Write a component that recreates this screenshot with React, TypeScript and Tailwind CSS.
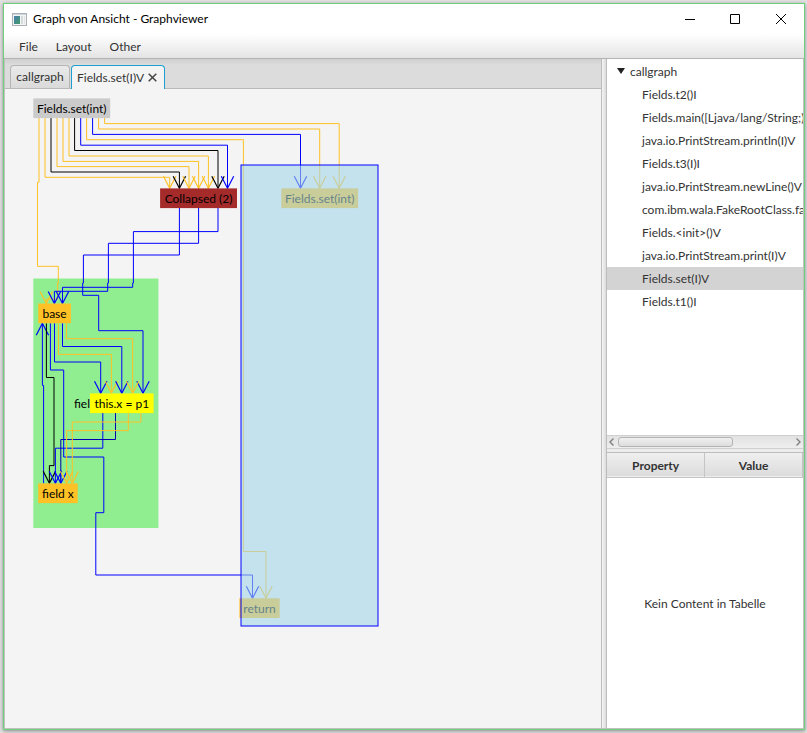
import React from "react";

const ORANGE = "#ffc125";
const BLUE = "#0000ff";
const BLACK = "#000000";

type Edge = { color: string; points: string; tip?: [number, number]; up?: boolean };

const edges: Edge[] = [
  { color: ORANGE, points: "39,118 39,182.3 37.5,182.3 37.5,266.3 58.3,266.3 58.3,283 57.6,283 57.6,299 46.3,299 46.3,303.5", tip: [46.3, 303.5] },
  { color: ORANGE, points: "45,118 45,177.3 169.7,177.3 169.7,188.3", tip: [169.7, 188.3] },
  { color: BLACK, points: "51,118 51,172 179.4,172 179.4,188.3", tip: [179.4, 188.3] },
  { color: ORANGE, points: "57,118 57,166.6 189,166.6 189,188.3", tip: [189, 188.3] },
  { color: ORANGE, points: "63,118 63,161.4 198.6,161.4 198.6,188.3", tip: [198.6, 188.3] },
  { color: ORANGE, points: "69,118 69,156 208.4,156 208.4,188.3", tip: [208.4, 188.3] },
  { color: BLACK, points: "74.6,118 74.6,150.5 218,150.5 218,188.3", tip: [218, 188.3] },
  { color: BLUE, points: "80.7,118 80.7,145.2 227.5,145.2 227.5,188.3", tip: [227.5, 188.3] },
  { color: ORANGE, points: "86.6,118 86.6,139.7 243.4,139.7 243.4,551.5 266,551.5 266,598.3", tip: [266, 598.3] },
  { color: BLUE, points: "92.6,118 92.6,134.4 300.5,134.4 300.5,188.3", tip: [300.5, 188.3] },
  { color: ORANGE, points: "98.6,118 98.6,129 319.7,129 319.7,188.3", tip: [319.7, 188.3] },
  { color: ORANGE, points: "104.6,118 104.6,123.6 339.2,123.6 339.2,188.3", tip: [339.2, 188.3] },
  { color: BLUE, points: "179.4,208 179.4,255 83.4,255 83.4,283 82.7,283 82.7,295.3 98.7,295.3 98.7,330.7 143,330.7 143,393.3", tip: [143, 393.3] },
  { color: BLUE, points: "198.6,208 198.6,243.3 108.4,243.3 108.4,283 107.7,283 107.7,291.3 54.4,291.3 54.4,303.5", tip: [54.4, 303.5] },
  { color: BLUE, points: "218,208 218,231.6 133.4,231.6 133.4,283 132.7,283 132.7,287.3 62.5,287.3 62.5,303.5", tip: [62.5, 303.5] },
  { color: BLUE, points: "42.4,323.3 42.4,385.4 43.6,385.4 43.6,483.3", tip: [42.4, 323.3], up: true },
  { color: BLACK, points: "46.4,323.3 46.4,377.5 54,377.5 54,465.6 49.4,465.6 49.4,483.3", tip: [49.4, 483.3] },
  { color: BLUE, points: "50.4,323.3 50.4,370 63.7,370 63.7,457 103.8,457 103.8,512.7 95.8,512.7 95.8,575 252.5,575 252.5,598.3", tip: [252.5, 598.3] },
  { color: BLUE, points: "54.5,323.3 54.5,362 100.7,362 100.7,393.3", tip: [100.7, 393.3] },
  { color: ORANGE, points: "58.4,323.3 58.4,354.4 111.4,354.4 111.4,393.3", tip: [111.4, 393.3] },
  { color: BLUE, points: "62.5,323.3 62.5,346.5 121.8,346.5 121.8,393.3", tip: [121.8, 393.3] },
  { color: ORANGE, points: "66.5,323.3 66.5,338.7 132.6,338.7 132.6,393.3", tip: [132.6, 393.3] },
  { color: BLUE, points: "102.8,413 102.8,448.2 55.4,448.2 55.4,483.3", tip: [55.4, 483.3] },
  { color: "#0000b0", points: "115.5,413 115.5,439.5 60.8,439.5 60.8,483.3" },
  { color: BLUE, points: "60.8,470 60.8,483.3", tip: [60.8, 483.3] },
  { color: ORANGE, points: "128.3,413 128.3,430.6 66.6,430.6 66.6,483.3", tip: [66.6, 483.3] },
  { color: ORANGE, points: "140.9,413 140.9,422 72.3,422 72.3,483.3", tip: [72.3, 483.3] },
];

type GraphNode = { label: string; x: number; y: number; w: number; fill: string };

const nodes: GraphNode[] = [
  { label: "Fields.set(int)", x: 33.3, y: 98.4, w: 76.9, fill: "#cbcbcb" },
  { label: "Collapsed (2)", x: 160.1, y: 188.4, w: 76.9, fill: "#a52a2a" },
  { label: "Fields.set(int)", x: 281.3, y: 188.4, w: 76.8, fill: ORANGE },
  { label: "base", x: 38.2, y: 303.5, w: 32.7, fill: ORANGE },
  { label: "this.x = p1", x: 90, y: 393.4, w: 63.6, fill: "#ffff00" },
  { label: "field x", x: 38.2, y: 483.4, w: 39.5, fill: ORANGE },
  { label: "return", x: 239.4, y: 598.3, w: 40.3, fill: ORANGE },
];

function arrow([x, y]: [number, number], up?: boolean) {
  const dy = up ? 12 : -12;
  return `${x - 6.2},${y + dy} ${x},${y} ${x + 6.2},${y + dy}`;
}

function GraphCanvas() {
  return (
    <svg width="596" height="639" viewBox="5 89 596 639" className="block shrink-0" role="img" aria-label="Fields.set(I)V">
      <rect x="33.3" y="278.5" width="125.1" height="249.5" fill="#90ee90" />
      <g fill="none" strokeWidth="1">
        {edges.map((e, i) => (
          <g key={i} stroke={e.color}>
            <polyline points={e.points} />
            {e.tip && <polyline points={arrow(e.tip, e.up)} strokeWidth="1.2" />}
          </g>
        ))}
      </g>
      <g className="text-xs" textAnchor="middle">
        <text x="74" y="408" textAnchor="start">fiel</text>
        {nodes.map((n, i) => (
          <g key={i}>
            <rect x={n.x} y={n.y} width={n.w} height="19.7" fill={n.fill} />
            <text x={n.x + n.w / 2} y={n.y + 14.6} fill="#000">{n.label}</text>
          </g>
        ))}
      </g>
      <rect x="241" y="165" width="137" height="461" fill="#a4d5e7" fillOpacity="0.6" stroke={BLUE} />
    </svg>
  );
}

const methods = [
  "Fields.t2()I",
  "Fields.main([Ljava/lang/String;)",
  "java.io.PrintStream.println(I)V",
  "Fields.t3(I)I",
  "java.io.PrintStream.newLine()V",
  "com.ibm.wala.FakeRootClass.fa",
  "Fields.<init>()V",
  "java.io.PrintStream.print(I)V",
  "Fields.set(I)V",
  "Fields.t1()I",
];

function TitleBar() {
  return (
    <header className="flex h-[30px] items-center bg-white pl-2 text-black">
      <svg width="15" height="13" viewBox="0 0 15 13" className="mr-1.5" aria-hidden="true">
        <defs>
          <linearGradient id="appIcon" x1="0" y1="0" x2="1" y2="1">
            <stop offset="0" stopColor="#4a7fb0" />
            <stop offset="1" stopColor="#3f9a68" />
          </linearGradient>
        </defs>
        <rect x="0.5" y="0.5" width="14" height="12" fill="#f4f4f4" stroke="#a9b0b6" />
        <rect x="1" y="1" width="13" height="1" fill="#cdd6de" />
        <rect x="2" y="3" width="6" height="8" fill="url(#appIcon)" />
        <rect x="9" y="3" width="2" height="8" fill="#d2dcdc" />
        <rect x="12" y="3" width="1" height="8" fill="#dfe5e5" />
      </svg>
      <h1 className="flex-1">Graph von Ansicht - Graphviewer</h1>
      <div className="flex">
        <button aria-label="Minimize" className="flex h-[30px] w-[44px] items-center justify-center">
          <svg width="10" height="10" viewBox="0 0 10 10" stroke="#000"><path d="M0 5.5H10" /></svg>
        </button>
        <button aria-label="Maximize" className="flex h-[30px] w-[46px] items-center justify-center">
          <svg width="10" height="10" viewBox="0 0 10 10" fill="none" stroke="#000"><path d="M.5 .5H9.5V9.5H.5Z" /></svg>
        </button>
        <button aria-label="Close" className="flex h-[30px] w-[46px] items-center justify-center">
          <svg width="10" height="10" viewBox="0 0 10 10" stroke="#000"><path d="M0 0L10 10M10 0L0 10" /></svg>
        </button>
      </div>
    </header>
  );
}

function MenuBar() {
  return (
    <nav className="flex h-[25px] items-center gap-[18px] border-b border-[#b3b3b3] bg-linear-to-b from-white to-[#e4e4e4] px-[15px] pt-0.5">
      <button>File</button>
      <button>Layout</button>
      <button>Other</button>
    </nav>
  );
}

function Tabs() {
  return (
    <div role="tablist" className="flex h-[30px] items-end border-b border-[#b9b9b9] bg-linear-to-b from-[#cfcfcf] via-[#dcdcdc] via-20% to-[#dcdcdc] pl-[5px]">
      <button role="tab" aria-selected="false" className="flex h-[23px] w-[60px] items-center justify-center rounded-t-sm border border-b-0 border-[#b5b5b5] bg-linear-to-b from-[#eaeaea] to-[#dadada]">
        callgraph
      </button>
      <div className="-mb-px ml-px flex h-6 w-[94px] items-center justify-between rounded-t-sm border border-b-0 border-[#1b9fd0] bg-[#f4f4f4] pr-[7px] pl-[5px]">
        <button role="tab" aria-selected="true">Fields.set(I)V</button>
        <button aria-label="Close tab">
          <svg width="9" height="9" viewBox="0 0 9 9" stroke="#444" strokeWidth="1.5"><path d="M.7 .7L8.3 8.3M8.3 .7L.7 8.3" /></svg>
        </button>
      </div>
    </div>
  );
}

function Tree() {
  return (
    <div className="flex h-[390px] shrink-0 flex-col overflow-hidden bg-white">
      <div role="tree" className="flex-1 pt-px">
        <div role="treeitem" aria-expanded="true" className="flex h-[23px] items-center pl-2.5">
          <svg width="8" height="6" viewBox="0 0 8 6" className="mr-[5px] mb-0.5 shrink-0"><path d="M0 0H8L4 6Z" fill="#222" /></svg>
          callgraph
        </div>
        {methods.map((m) => (
          <div
            key={m}
            role="treeitem"
            aria-selected={m === "Fields.set(I)V"}
            className="flex h-[23px] items-center pl-[35px] whitespace-nowrap aria-selected:bg-[#d3d3d3]"
          >
            {m}
          </div>
        ))}
      </div>
      <div className="flex h-[14px] items-center border-y border-[#cfcfcf] bg-linear-to-b from-[#e2e2e2] to-[#eeeeee] px-0.5">
        <button aria-label="Scroll left"><svg width="5" height="8" viewBox="0 0 5 8" fill="none" stroke="#808080" strokeWidth="1.4"><path d="M4.5 .5L1 4L4.5 7.5" /></svg></button>
        <div className="mx-1 flex-1">
          <div className="h-2.5 w-[115px] rounded-[3px] border border-[#b4b4b4] bg-linear-to-b from-[#f0f0f0] to-[#dddddd]" />
        </div>
        <button aria-label="Scroll right"><svg width="5" height="8" viewBox="0 0 5 8" fill="none" stroke="#808080" strokeWidth="1.4"><path d="M.5 .5L4 4L.5 7.5" /></svg></button>
      </div>
    </div>
  );
}

function PropertyTable() {
  return (
    <div className="flex flex-1 flex-col bg-white">
      <table className="w-full table-fixed border-collapse">
        <thead>
          <tr className="h-6 border-b border-[#c4c4c4] bg-linear-to-b from-[#efefef] to-[#dcdcdc]">
            <th className="border-r border-[#c4c4c4] p-0 pt-[3px] font-bold">Property</th>
            <th className="border-r border-[#c4c4c4] p-0 pt-[3px] font-bold">Value</th>
          </tr>
        </thead>
      </table>
      <div className="flex flex-1 items-center justify-center pt-0.5">Kein Content in Tabelle</div>
    </div>
  );
}

export default function App() {
  return (
    <div className="h-screen overflow-hidden bg-[#e2e2e2] pt-[3px] pr-0.5 pb-[3px] pl-[3px] font-['Lato','Open_Sans',sans-serif] text-xs text-[#333]">
      <div className="flex h-full flex-col border border-[#70cf7c] shadow-[0_1px_4px_rgba(0,0,0,0.4)]">
        <TitleBar />
        <MenuBar />
        <main className="flex min-h-0 flex-1 border-x border-b border-[#c0c0c0] bg-[#f4f4f4]">
          <section className="flex min-w-0 flex-1 flex-col overflow-hidden">
            <Tabs />
            <GraphCanvas />
          </section>
          <div className="w-1.5 shrink-0 cursor-col-resize border-x border-[#bdbdbd] bg-linear-to-r from-[#f4f4f4] to-[#dcdcdc]" />
          <aside className="flex w-[196px] shrink-0 flex-col">
            <Tree />
            <div className="h-1 shrink-0 cursor-row-resize border-b border-[#bdbdbd] bg-[#ececec]" />
            <PropertyTable />
          </aside>
        </main>
      </div>
    </div>
  );
}
